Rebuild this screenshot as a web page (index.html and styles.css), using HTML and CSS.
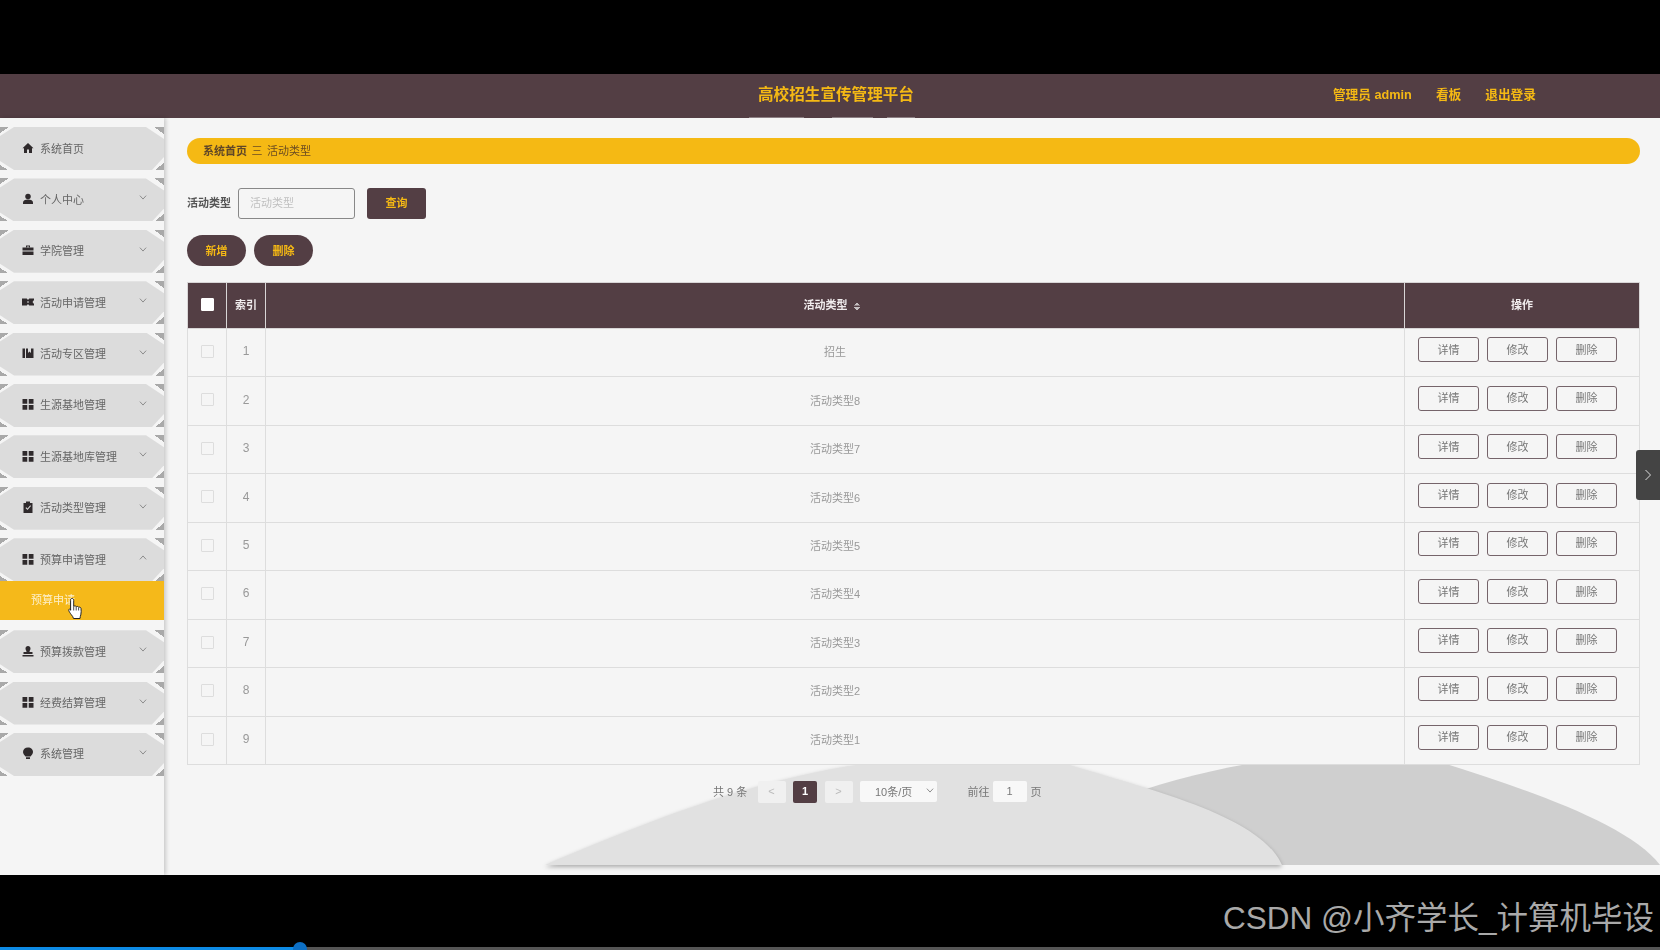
FILE: index.html
```html
<!DOCTYPE html>
<html lang="zh-CN">
<head>
    <meta charset="UTF-8">
    <title>高校招生宣传管理平台</title>
    <link rel="stylesheet" href="styles.css">
</head>
<body>

    <!-- icon sprite -->
    <svg class="sprite" width="0" height="0">
        <symbol id="i-home" viewBox="0 0 24 24"><path d="M12 2 1 12.500h3V22h6v-7h4v7h6v-9.500h3z"/></symbol>
        <symbol id="i-user" viewBox="0 0 24 24"><circle cx="12" cy="7" r="5.500"/><path d="M2 22v-3c0-4 4-6 10-6s10 2 10 6v3z"/></symbol>
        <symbol id="i-case" viewBox="0 0 24 24"><path d="M8 7V3h8v4h-2V5h-4v2z"/><path d="M1 7h22v6H1z"/><path d="M1 15h22v7H1z"/></symbol>
        <symbol id="i-ticket" viewBox="0 0 24 24"><path fill-rule="evenodd" d="M0 5h9.500l2.500 3 2.500-3H24v3l-3 4 3 4v3H14.500L12 16l-2.500 3H0zM11 10v4h2v-4z"/></symbol>
        <symbol id="i-book" viewBox="0 0 24 24"><path d="M1 3h5v19H1z"/><path d="M8 3h4v9l3-3 3 3V3h5v19H8z"/></symbol>
        <symbol id="i-grid" viewBox="0 0 24 24"><path d="M1 2h9.500v9.500H1zM13.500 2H23v9.500h-9.500zM1 14h9.500v9.500H1zM13.500 14H23v9.500h-9.500z"/></symbol>
        <symbol id="i-check" viewBox="0 0 24 24"><path fill-rule="evenodd" d="M8 1h8v3h5v20H3V4h5zM7 14l4 4 7-8-1.500-1.500-5.500 6.300L8.500 12.500z"/></symbol>
        <symbol id="i-stamp" viewBox="0 0 24 24"><path d="M12 2c3 0 5 2 5 5 0 3-2 4-2 7h6v4H3v-4h6c0-3-2-4-2-7 0-3 2-5 5-5z"/><path d="M1 20h22v3H1z"/></symbol>
        <symbol id="i-bulb" viewBox="0 0 24 24"><path d="M12 1c6 0 10 4 10 9 0 4-3 6-5 9H7c-2-3-5-5-5-9 0-5 4-9 10-9z"/><path d="M8 20.500h8V24H8z"/></symbol>
        <symbol id="i-down" viewBox="0 0 12 8"><path d="M1 1 6 6.500 11 1" fill="none" stroke="#888" stroke-width="1.500"/></symbol>
        <symbol id="i-up" viewBox="0 0 12 8"><path d="M1 7 6 1.500 11 7" fill="none" stroke="#888" stroke-width="1.500"/></symbol>
    </svg>

    <div class="app">
        <!-- 顶部 -->
        <header class="topbar">
            <div class="title">高校招生宣传管理平台</div>
            <nav class="top-nav">
                <a>管理员 admin</a>
                <a>看板</a>
                <a>退出登录</a>
            </nav>
        </header>

        <div class="layout">
            <!-- 左侧菜单 -->
            <aside class="sidebar">
                <div class="menu-item"><svg class="menu-icon"><use href="#i-home"/></svg><span>系统首页</span></div>
                <div class="menu-item"><svg class="menu-icon"><use href="#i-user"/></svg><span>个人中心</span><svg class="arrow"><use href="#i-down"/></svg></div>
                <div class="menu-item"><svg class="menu-icon"><use href="#i-case"/></svg><span>学院管理</span><svg class="arrow"><use href="#i-down"/></svg></div>
                <div class="menu-item"><svg class="menu-icon"><use href="#i-ticket"/></svg><span>活动申请管理</span><svg class="arrow"><use href="#i-down"/></svg></div>
                <div class="menu-item"><svg class="menu-icon"><use href="#i-book"/></svg><span>活动专区管理</span><svg class="arrow"><use href="#i-down"/></svg></div>
                <div class="menu-item"><svg class="menu-icon"><use href="#i-grid"/></svg><span>生源基地管理</span><svg class="arrow"><use href="#i-down"/></svg></div>
                <div class="menu-item"><svg class="menu-icon"><use href="#i-grid"/></svg><span>生源基地库管理</span><svg class="arrow"><use href="#i-down"/></svg></div>
                <div class="menu-item"><svg class="menu-icon"><use href="#i-check"/></svg><span>活动类型管理</span><svg class="arrow"><use href="#i-down"/></svg></div>
                <div class="menu-item open"><svg class="menu-icon"><use href="#i-grid"/></svg><span>预算申请管理</span><svg class="arrow"><use href="#i-up"/></svg></div>
                <div class="sub-item">预算申请
                    <svg class="hand" viewBox="0 0 16 24">
                        <path d="M4 1.500c1 0 1.700.7 1.700 1.800v6c.6-.5 2-.5 2.500.3.700-.4 2-.3 2.400.6.800-.3 2.200 0 2.400 1.200.3 2 .3 4.500-.2 6.500-.3 1.300-.8 2-.8 3.600H5.500c-.3-1.500-1.200-2.500-2.200-3.800C2.300 16.400 1 14.500.8 13.400c-.2-1.200 1-1.800 1.800-1.100l.000 1V3.300C2.300 2.200 3 1.500 4 1.500z" fill="#fff" stroke="#222" stroke-width="1"/>
                        <path d="M5.700 9.500v4M8.200 10v3.500M10.600 10.500v3" fill="none" stroke="#222" stroke-width=".8"/>
                    </svg>
                </div>
                <div class="menu-item"><svg class="menu-icon"><use href="#i-stamp"/></svg><span>预算拨款管理</span><svg class="arrow"><use href="#i-down"/></svg></div>
                <div class="menu-item"><svg class="menu-icon"><use href="#i-grid"/></svg><span>经费结算管理</span><svg class="arrow"><use href="#i-down"/></svg></div>
                <div class="menu-item"><svg class="menu-icon"><use href="#i-bulb"/></svg><span>系统管理</span><svg class="arrow"><use href="#i-down"/></svg></div>
            </aside>

            <!-- 内容 -->
            <main class="main">
                <svg class="bg-shapes" viewBox="164 762 1496 113" width="1496" height="113">
                    <path class="shape-dark" d="M1125 796C1170 780 1220 768 1260 762H1440C1530 790 1630 825 1660 865H1250z"/>
                    <path class="shape-light" d="M545 865C640 825 760 775 880 762H1060C1150 790 1260 815 1282 865z"/>
                </svg>

                <div class="breadcrumb">
                    <b>系统首页</b><i>三</i><span>活动类型</span>
                </div>

                <div class="search-row">
                    <label>活动类型</label>
                    <input class="search-input" type="text" placeholder="活动类型">
                    <button class="btn-query">查询</button>
                </div>

                <div class="action-row">
                    <button class="btn-round">新增</button>
                    <button class="btn-round">删除</button>
                </div>

                <table class="data-table">
                    <colgroup>
                        <col class="col-check"><col class="col-index"><col><col class="col-ops">
                    </colgroup>
                    <thead>
                        <tr>
                            <th><span class="check head"></span></th>
                            <th>索引</th>
                            <th>活动类型<span class="sort"></span></th>
                            <th>操作</th>
                        </tr>
                    </thead>
                    <tbody>
                        <tr><td><span class="check"></span></td><td class="num">1</td><td>招生</td><td><div class="ops"><button>详情</button><button>修改</button><button>删除</button></div></td></tr>
                        <tr><td><span class="check"></span></td><td class="num">2</td><td>活动类型8</td><td><div class="ops"><button>详情</button><button>修改</button><button>删除</button></div></td></tr>
                        <tr><td><span class="check"></span></td><td class="num">3</td><td>活动类型7</td><td><div class="ops"><button>详情</button><button>修改</button><button>删除</button></div></td></tr>
                        <tr><td><span class="check"></span></td><td class="num">4</td><td>活动类型6</td><td><div class="ops"><button>详情</button><button>修改</button><button>删除</button></div></td></tr>
                        <tr><td><span class="check"></span></td><td class="num">5</td><td>活动类型5</td><td><div class="ops"><button>详情</button><button>修改</button><button>删除</button></div></td></tr>
                        <tr><td><span class="check"></span></td><td class="num">6</td><td>活动类型4</td><td><div class="ops"><button>详情</button><button>修改</button><button>删除</button></div></td></tr>
                        <tr><td><span class="check"></span></td><td class="num">7</td><td>活动类型3</td><td><div class="ops"><button>详情</button><button>修改</button><button>删除</button></div></td></tr>
                        <tr><td><span class="check"></span></td><td class="num">8</td><td>活动类型2</td><td><div class="ops"><button>详情</button><button>修改</button><button>删除</button></div></td></tr>
                        <tr><td><span class="check"></span></td><td class="num">9</td><td>活动类型1</td><td><div class="ops"><button>详情</button><button>修改</button><button>删除</button></div></td></tr>
                    </tbody>
                </table>

                <div class="pager">
                    <span class="total">共 9 条</span>
                    <span class="page-btn">&lt;</span>
                    <span class="page-btn current">1</span>
                    <span class="page-btn">&gt;</span>
                    <span class="page-size">10条/页<svg class="arrow-small"><use href="#i-down"/></svg></span>
                    <span class="goto">前往</span>
                    <span class="page-input">1</span>
                    <span class="goto-end">页</span>
                </div>

                <div class="side-tab">
                    <svg viewBox="0 0 8 12" width="8" height="12"><path d="M1.500 1 6.500 6l-5 5" fill="none" stroke="#ddd" stroke-width="1"/></svg>
                </div>
            </main>
        </div>
    </div>

    <!-- 视频底栏 -->
    <footer class="video-bar">
        <div class="watermark">CSDN @小齐学长_计算机毕设</div>
        <div class="progress"><div class="progress-done"></div></div>
    </footer>

</body>
</html>
```

FILE: styles.css
```css
/* 整体 */
body {
    margin: 0;
    padding-top: 74px;
    background-color: #000;
    font-family: "Liberation Sans", "Noto Sans CJK SC", sans-serif;
    font-size: 11px;
    overflow: hidden;
}

.sprite {
    position: absolute;
}

.app {
    height: 801px;
    background-color: #f5f5f5;
    filter: blur(0.35px);
}

/* 顶部 */
.topbar {
    position: relative;
    display: flex;
    align-items: center;
    height: 44px;
    padding-bottom: 6px;
    box-sizing: border-box;
    background-color: #533e44;
    color: #f5b914;
    font-weight: bold;
}

.topbar::after {
    content: "";
    position: absolute;
    left: 749px;
    bottom: 0;
    width: 166px;
    height: 1px;
    background: linear-gradient(to right, #8d8084 55px, transparent 55px, transparent 83px, #8d8084 83px, #8d8084 124px, transparent 124px, transparent 138px, #8d8084 138px);
}

.title {
    margin-left: 758px;
    font-size: 15.6px;
}

.top-nav {
    display: flex;
    gap: 24px;
    margin-left: auto;
    padding-right: 124px;
    font-size: 12.7px;
}

/* 布局 */
.layout {
    display: flex;
    height: 757px;
}

.sidebar {
    flex: none;
    width: 164px;
    padding-top: 9px;
    box-sizing: border-box;
    background-color: #f5f5f5;
    box-shadow: 2px 0 4px rgba(0, 0, 0, 0.18);
    position: relative;
    z-index: 1;
}

/* 菜单项: 四角小三角 + 切角底色 */
.menu-item {
    position: relative;
    display: flex;
    align-items: center;
    height: 43px;
    margin-bottom: 8.4px;
    padding: 0 0 2px 22px;
    box-sizing: border-box;
    color: #666;
    background:
        linear-gradient(to bottom right, #a9a9a9 50%, transparent 50%) left top / 9px 6px no-repeat,
        linear-gradient(to bottom left, #a9a9a9 50%, transparent 50%) right top / 10px 7px no-repeat,
        linear-gradient(to top right, #a9a9a9 50%, transparent 50%) left bottom / 8px 5px no-repeat,
        linear-gradient(to top left, #a9a9a9 50%, transparent 50%) right bottom / 9px 7px no-repeat;
}

.menu-item::before {
    content: "";
    position: absolute;
    inset: 0;
    background-color: #dcdcdc;
    clip-path: polygon(14px 0, 146px 0, 100% 12px, 100% 30px, 152px 100%, 14px 100%, 0 34px, 0 9px);
}

.menu-item > * {
    position: relative;
}

.menu-item.open {
    margin-bottom: 0;
}

.menu-icon {
    width: 12px;
    height: 12px;
    margin-right: 6px;
    fill: #2f2a2c;
}

.menu-item .arrow {
    position: absolute;
    right: 17px;
    top: 17px;
    width: 8px;
    height: 5px;
}

.sub-item {
    position: relative;
    height: 39px;
    margin-bottom: 10px;
    padding-left: 31px;
    line-height: 38px;
    background-color: #f5b91a;
    color: #fdf0cc;
}

.hand {
    position: absolute;
    left: 68px;
    top: 16px;
    width: 16px;
    height: 24px;
}

/* 内容 */
.main {
    position: relative;
    flex: 1;
    padding: 20px 20px 0 23px;
    overflow: hidden;
}

.bg-shapes {
    position: absolute;
    left: 0;
    bottom: 0;
}

.shape-dark {
    fill: #cfcfcf;
}

.shape-light {
    fill: #e1e1e1;
    filter: drop-shadow(0 2px 2px rgba(0, 0, 0, 0.3));
}

.breadcrumb {
    position: relative;
    display: flex;
    align-items: center;
    height: 26px;
    padding: 0 0 2px 16px;
    box-sizing: border-box;
    border-radius: 13px;
    background-color: #f5b914;
    color: #6b4c22;
}

.breadcrumb b {
    color: #5f4628;
}

.breadcrumb i {
    margin: 0 4.500px;
    font-style: normal;
}

.search-row {
    position: relative;
    display: flex;
    align-items: center;
    height: 31px;
    margin-top: 24px;
    color: #555;
}

.search-row label {
    padding-bottom: 3px;
    font-weight: bold;
}

.search-input {
    width: 117px;
    height: 31px;
    margin-left: 7px;
    padding: 0 11px 2px;
    box-sizing: border-box;
    border: 1px solid #888;
    border-radius: 3px;
    background-color: #f5f5f5;
    font: inherit;
    outline: none;
}

.search-input::placeholder {
    color: #c0c0c0;
}

.btn-query {
    width: 59px;
    height: 31px;
    margin-left: 12px;
    padding: 0 0 3px;
    border: none;
    border-radius: 3px;
    background-color: #533e44;
    color: #f5b914;
    font: inherit;
    font-weight: bold;
}

.action-row {
    position: relative;
    display: flex;
    gap: 8px;
    margin-top: 16px;
}

.btn-round {
    width: 59px;
    height: 31px;
    padding: 0 0 2px;
    border: none;
    border-radius: 16px;
    background-color: #533e44;
    color: #f5b914;
    font: inherit;
    font-weight: bold;
}

/* 表格 */
.data-table {
    position: relative;
    width: 1453px;
    margin-top: 16px;
    border-collapse: collapse;
    table-layout: fixed;
    background-color: #f5f5f5;
    color: #999;
    text-align: center;
}

.col-check,
.col-index {
    width: 39px;
}

.col-ops {
    width: 235px;
}

.data-table th {
    height: 42px;
    padding: 0 0 3px;
    border: 1px solid #d8d5d6;
    background-color: #533e44;
    color: #f0eced;
}

.data-table td {
    height: 44.450px;
    padding: 0 0 3px;
    border: 1px solid #ddd;
}

.data-table .num {
    font-size: 12px;
}

.check {
    display: inline-block;
    width: 11px;
    height: 11px;
    border: 1px solid #ddd;
    border-radius: 1px;
    vertical-align: middle;
}

.check.head {
    border-color: #fff;
    background-color: #fff;
}

.sort {
    display: inline-block;
    width: 6px;
    height: 8px;
    margin: 0 7px 0 6px;
    vertical-align: -1px;
    background:
        linear-gradient(to bottom right, transparent 50%, #c5bfc1 50%) left top / 3px 3.500px no-repeat,
        linear-gradient(to bottom left, transparent 50%, #c5bfc1 50%) right top / 3px 3.500px no-repeat,
        linear-gradient(to top right, transparent 50%, #c5bfc1 50%) left bottom / 3px 3.500px no-repeat,
        linear-gradient(to top left, transparent 50%, #c5bfc1 50%) right bottom / 3px 3.500px no-repeat;
}

.ops {
    display: flex;
    gap: 8px;
    padding: 0 0 3px 13px;
}

.ops button {
    width: 61px;
    height: 25px;
    padding: 0 0 2px;
    border: 1px solid #75646a;
    border-radius: 3px;
    background-color: #f5f5f5;
    color: #777;
    font: inherit;
}

/* 分页 */
.pager {
    position: relative;
    display: flex;
    align-items: center;
    height: 22px;
    margin-top: 16px;
    padding-left: 526px;
    color: #777;
}

.total {
    width: 44.500px;
    padding-bottom: 2px;
}

.page-btn {
    width: 28px;
    height: 22px;
    margin-right: 7.500px;
    border-radius: 2px;
    background-color: #f0f0f0;
    color: #bbb;
    text-align: center;
    line-height: 20px;
}

.page-btn.current {
    width: 24px;
    background-color: #533e44;
    color: #fff;
    font-weight: bold;
}

.page-size {
    display: flex;
    align-items: center;
    width: 77px;
    height: 21px;
    padding: 0 0 2px 15px;
    box-sizing: border-box;
    background-color: #f8f8f8;
    border-radius: 2px;
}

.arrow-small {
    width: 8px;
    height: 5px;
    margin-left: 14px;
}

.goto {
    margin-left: 30.500px;
    padding-bottom: 2px;
}

.goto-end {
    padding-bottom: 2px;
}

.page-input {
    width: 34px;
    height: 21px;
    margin: 0 4px 0 3px;
    border-radius: 2px;
    background-color: #f8f8f8;
    text-align: center;
    line-height: 20px;
}

.side-tab {
    position: absolute;
    right: 0;
    top: 332px;
    display: flex;
    align-items: center;
    justify-content: center;
    width: 24px;
    height: 50px;
    border-radius: 3px 0 0 3px;
    background-color: #444;
}

/* 视频底栏 */
.video-bar {
    position: relative;
    height: 75px;
}

.watermark {
    position: absolute;
    right: 6px;
    top: 24px;
    color: #a9a9a9;
    font-size: 31.500px;
    line-height: 38px;
    white-space: nowrap;
}

.progress {
    position: absolute;
    left: 0;
    right: 0;
    bottom: 0;
    height: 3px;
    background-color: #555;
}

.progress-done {
    position: relative;
    width: 300px;
    height: 100%;
    background-color: #0d8be6;
}

.progress-done::after {
    content: "";
    position: absolute;
    right: -7px;
    top: -5px;
    width: 14px;
    height: 14px;
    border-radius: 50%;
    background-color: #0d6fc4;
}
```
